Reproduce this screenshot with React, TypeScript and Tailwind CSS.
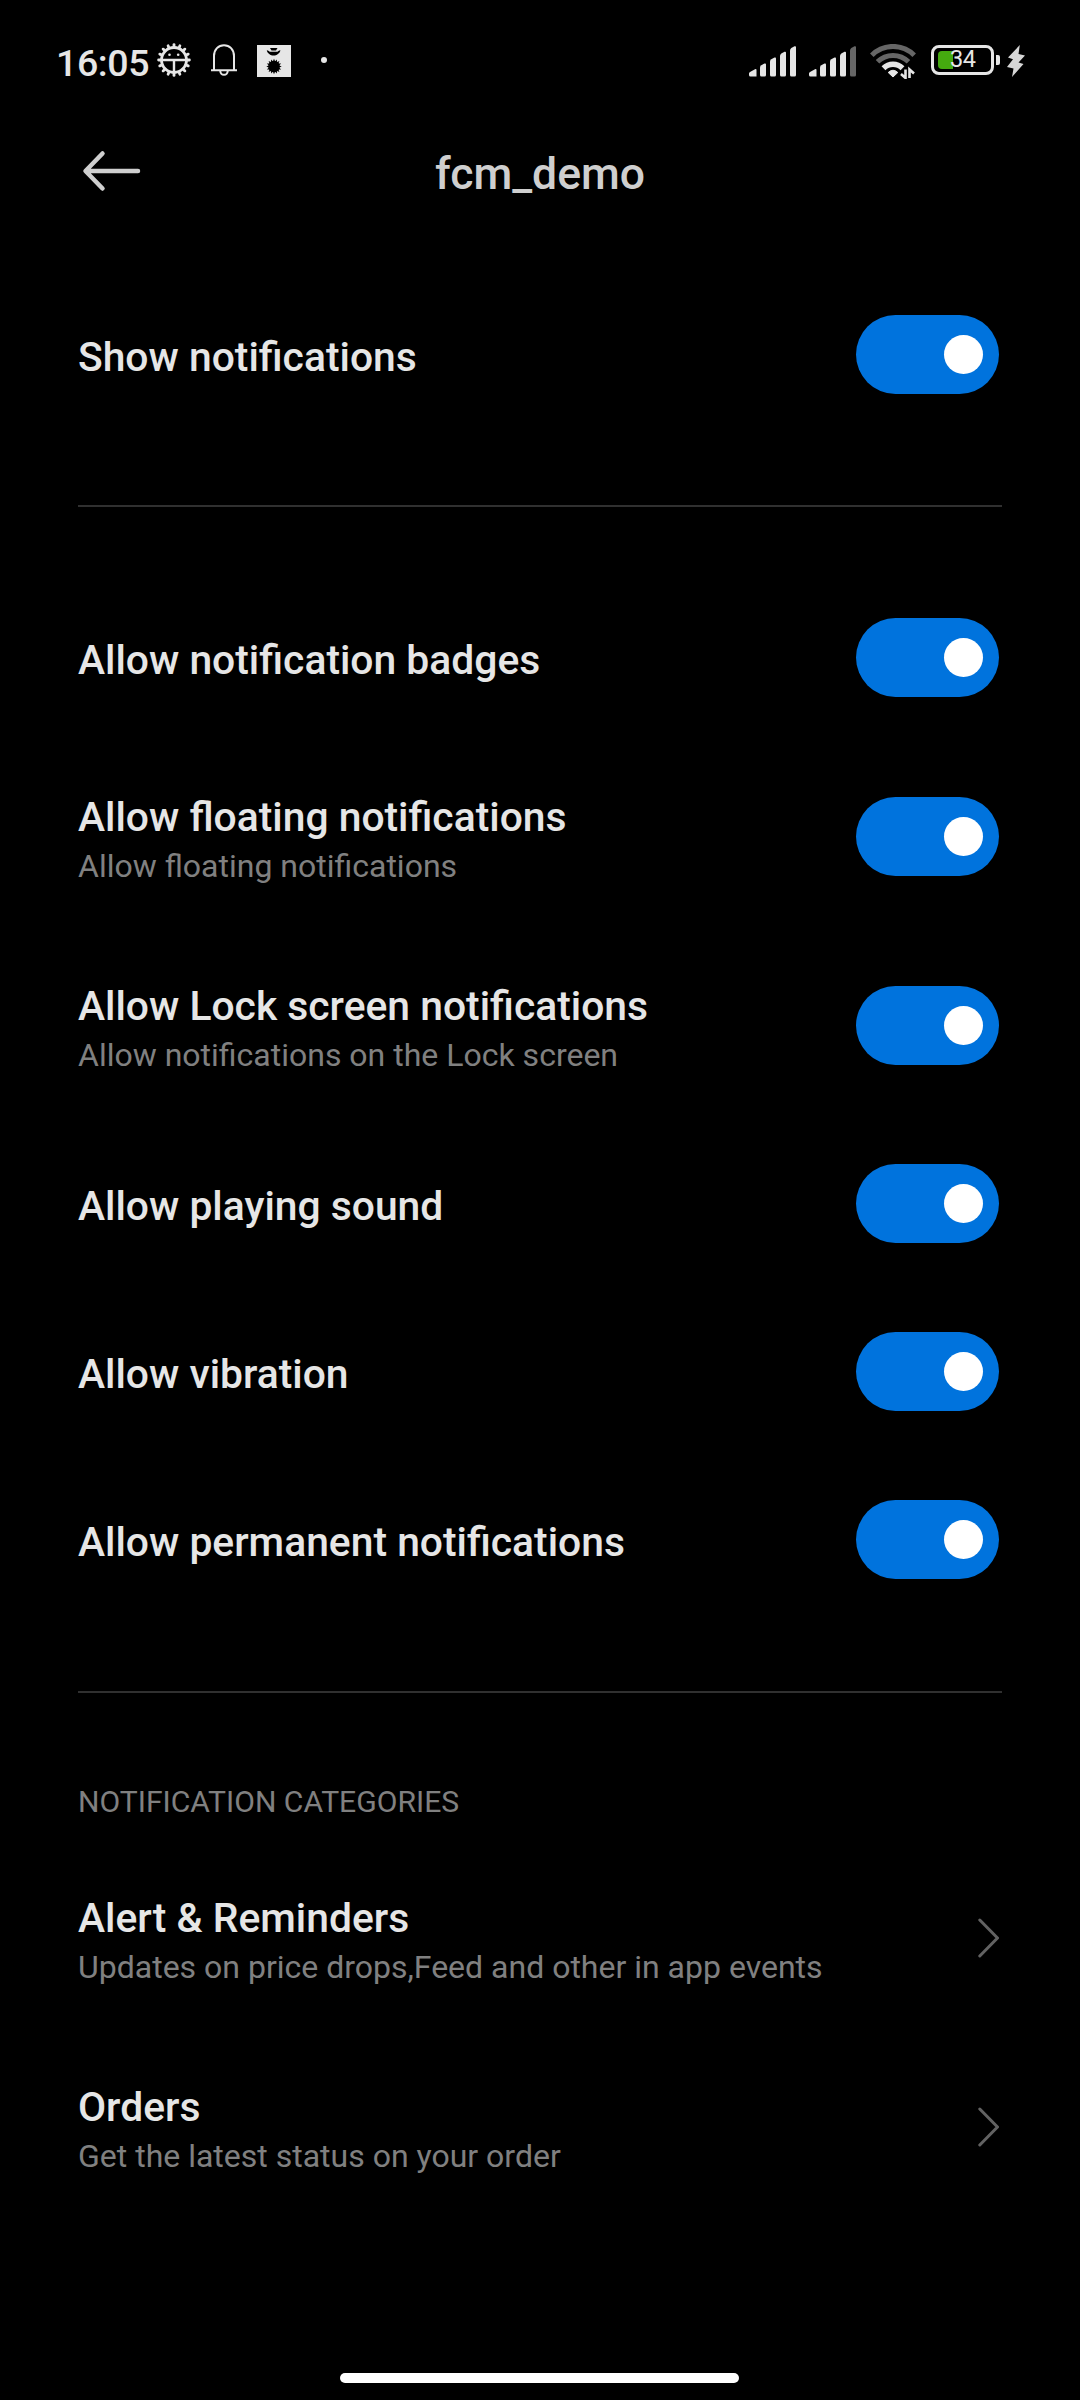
import React from 'react';

const gearTeeth = Array.from({ length: 16 }, (_, i) => (i * 360) / 16);

function GearIcon() {
  return (
    <svg width="34" height="34" viewBox="0 0 34 34" fill="none" className="shrink-0">
      {gearTeeth.map((angle) => (
        <path key={angle} d="M17 1.600V4" stroke="#e6e6e6" strokeWidth="2.800" strokeLinecap="round" transform={`rotate(${angle} 17 17)`} />
      ))}
      <circle cx="17" cy="17" r="12.500" stroke="#e6e6e6" strokeWidth="2.800" />
      <path d="M5 17h24M17 17v13" stroke="#e6e6e6" strokeWidth="2.400" />
      <circle cx="12.500" cy="11.800" r="1.300" fill="#e6e6e6" />
      <circle cx="21.200" cy="11.800" r="1.300" fill="#e6e6e6" />
    </svg>
  );
}

function BellIcon() {
  return (
    <svg width="26" height="32" viewBox="0 0 26 32" fill="none" stroke="#e6e6e6" strokeWidth="2" className="shrink-0">
      <path d="M3 26V12C3 5.500 7.500 1.200 13 1.200S23 5.500 23 12v14" />
      <path d="M0 26.200h26M9.200 27c.3 2.400 1.800 3.800 3.800 3.800s3.500-1.400 3.800-3.800" />
    </svg>
  );
}

function CardIcon() {
  return (
    <svg width="34" height="32" viewBox="0 0 34 32" className="mt-[2px] shrink-0">
      <path d="M0 0h34v32H0z" fill="#e6e6e6" />
      <path d="M13 3h7.500l-1.500 2.400h-4.500z" fill="#000" />
      <path d="M9.800 5.200c1.600.2 2.400 1.600 4 1.600h5.600c1.600 0 2.400-1.400 4-1.600-.6 3.200-3.600 5.300-6.800 5.300s-6.200-2.100-6.800-5.300z" fill="#000" />
      <circle cx="17" cy="21.500" r="5.700" fill="#000" />
      {gearTeeth.map((angle) => (
        <path key={angle} d="M17 13.800l1.200 3h-2.400z" fill="#000" transform={`rotate(${angle} 17 21.500)`} />
      ))}
    </svg>
  );
}

function SignalIcon({ weak = false }: { weak?: boolean }) {
  return (
    <svg width="48" height="31" viewBox="0 0 48 31" fill="#e6e6e6" className="shrink-0">
      <path d="M0 27.500Q0 26.500 1 26L6 23.200Q7.500 22.500 7.500 24V30.500H1.500Q0 30.500 0 29z" />
      <path d="M11 21.500Q11 20 12.300 19.200L15.500 17.600Q17 17 17 18.500V29Q17 30.500 15.500 30.500H12.500Q11 30.500 11 29z" />
      <path d="M21 15.500Q21 14 22.300 13.200L25.500 11.600Q27 11 27 12.500V29Q27 30.500 25.500 30.500H22.500Q21 30.500 21 29z" />
      <path d="M31 10Q31 8.500 32.300 7.500L35.500 5.800Q37 5.200 37 6.700V29Q37 30.500 35.500 30.500H32.500Q31 30.500 31 29z" />
      <path d="M41 4.500Q41 3 42.300 2L45.500.3Q47 -.2 47 1.300V29Q47 30.500 45.500 30.500H42.500Q41 30.500 41 29z" fill={weak ? '#666' : '#e6e6e6'} />
    </svg>
  );
}

function WifiIcon() {
  return (
    <svg width="46" height="35" viewBox="0 0 46 35" fill="none" className="shrink-0">
      <path d="M1.800 11.200A30 30 0 0 1 44.200 11.200" stroke="#666" strokeWidth="5" />
      <path d="M7.500 17.800A22 22 0 0 1 38.500 17.800" stroke="#666" strokeWidth="5" />
      <path d="M13.500 24.200A13.500 13.500 0 0 1 32.500 24.200" stroke="#e6e6e6" strokeWidth="5.500" />
      <path d="M23 33l-4.800-4.500q4.800-4.500 9.600 0z" fill="#e6e6e6" stroke="#e6e6e6" strokeLinejoin="round" />
      <path d="M35.500 25.500v8.500l-4.500-4M39.500 34v-8.500l4.500 4" stroke="#e6e6e6" strokeWidth="2.600" />
    </svg>
  );
}

function Battery() {
  return (
    <div className="mb-[2px] flex items-center gap-[2px]">
      <div className="flex h-[30px] w-[63px] items-center rounded-[8px] border-[3px] border-[#e6e6e6] pl-[4px]">
        <div className="h-[18px] w-[15px] rounded-l-[4px] bg-[#45a90f]" />
        <span className="-ml-[3px] text-[23.5px] leading-none tracking-[-0.5px]">34</span>
      </div>
      <div className="h-[10px] w-[4px] rounded-r-[2px] bg-[#e6e6e6]" />
    </div>
  );
}

function BoltIcon() {
  return (
    <svg width="18" height="32" viewBox="0 0 18 32" fill="#d6d6d6" className="shrink-0">
      <path d="M12.800 0L1 12.500l5 1.800L0 22l6.500 1.500L5 32 16.500 19l-5-1.500L18 10.500l-6.500-1.500z" />
    </svg>
  );
}

function StatusBar() {
  return (
    <div className="flex h-[122px] items-start justify-between pt-[43px] pr-[55px] pl-[56px] text-[#e6e6e6]">
      <div className="flex h-[34px] items-center">
        <span className="mt-[6px] w-[101px] text-[37.5px] leading-[34px] font-medium tracking-[-0.4px]">16:05</span>
        <GearIcon />
        <div className="w-[20px]" />
        <BellIcon />
        <div className="w-[20px]" />
        <CardIcon />
        <div className="ml-[30px] h-[6px] w-[6px] rounded-full bg-[#e6e6e6]" />
      </div>
      <div className="mt-[1px] flex h-[34px] items-center">
        <SignalIcon />
        <div className="w-[12px]" />
        <SignalIcon weak />
        <div className="w-[13px]" />
        <WifiIcon />
        <div className="w-[15px]" />
        <Battery />
        <div className="w-[7px]" />
        <BoltIcon />
      </div>
    </div>
  );
}

function Toggle() {
  return (
    <div role="switch" aria-checked="true" className="flex h-[79px] w-[143px] shrink-0 items-center justify-end rounded-full bg-[#0073dd] pr-4">
      <div className="h-[39px] w-[39px] rounded-full bg-white" />
    </div>
  );
}

function Chevron() {
  return (
    <svg width="24" height="42" viewBox="0 0 24 42" fill="none" className="mt-[19px] shrink-0">
      <path d="M4.800 3L22.500 21L4.800 39" stroke="#626262" strokeWidth="3" strokeLinecap="round" strokeLinejoin="round" />
    </svg>
  );
}

type RowProps = {
  title: string;
  subtitle?: string;
  children: React.ReactNode;
};

function Row({ title, subtitle, children }: RowProps) {
  return (
    <div className={`flex items-start justify-between pr-[81px] pl-[78px] ${subtitle ? 'h-[189px] pt-[55px]' : 'h-[168px] pt-[44px]'}`}>
      <div className={subtitle ? '-mt-[4px]' : 'mt-[18px]'}>
        <p className="text-[40.8px] leading-[48px] font-medium text-[#e6e6e6]">{title}</p>
        {subtitle && <p className="mt-[1px] text-[32px] leading-[48px] text-[#808080]">{subtitle}</p>}
      </div>
      {children}
    </div>
  );
}

function Divider() {
  return <div className="mx-[78px] h-[2px] bg-[#303030]" />;
}

export default function App() {
  return (
    <div className="flex h-[2400px] w-[1080px] flex-col bg-black font-['Roboto',sans-serif]">
      <StatusBar />

      <header className="grid h-[104px] grid-cols-3 items-center px-[78px] text-[#cfcfcf]">
        <svg width="64" height="42" viewBox="0 0 64 42" fill="none" className="mb-[6px] ml-[3px]">
          <path d="M21.500 3.500L4.500 21L21.500 38.500M5 21H57" stroke="#cfcfcf" strokeWidth="4.500" strokeLinecap="round" strokeLinejoin="round" />
        </svg>
        <h1 className="text-center text-[44.5px] leading-[54px] font-medium">fcm_demo</h1>
      </header>

      <main className="flex flex-col pt-[45px]">
        <Row title="Show notifications"><Toggle /></Row>
        <div className="h-[66px]" />
        <Divider />
        <div className="h-[67px]" />
        <Row title="Allow notification badges"><Toggle /></Row>
        <Row title="Allow floating notifications" subtitle="Allow floating notifications"><Toggle /></Row>
        <Row title="Allow Lock screen notifications" subtitle="Allow notifications on the Lock screen"><Toggle /></Row>
        <Row title="Allow playing sound"><Toggle /></Row>
        <Row title="Allow vibration"><Toggle /></Row>
        <Row title="Allow permanent notifications"><Toggle /></Row>
        <div className="h-[67px]" />
        <Divider />
        <h2 className="mt-[85px] mb-[17px] pl-[78px] text-[30.1px] leading-[48px] text-[#808080]">NOTIFICATION CATEGORIES</h2>
        <Row title="Alert &amp; Reminders" subtitle="Updates on price drops,Feed and other in app events"><Chevron /></Row>
        <Row title="Orders" subtitle="Get the latest status on your order"><Chevron /></Row>
      </main>

      <div className="mt-auto mb-[17px] ml-[340px] h-[10px] w-[399px] rounded-full bg-white" />
    </div>
  );
}
